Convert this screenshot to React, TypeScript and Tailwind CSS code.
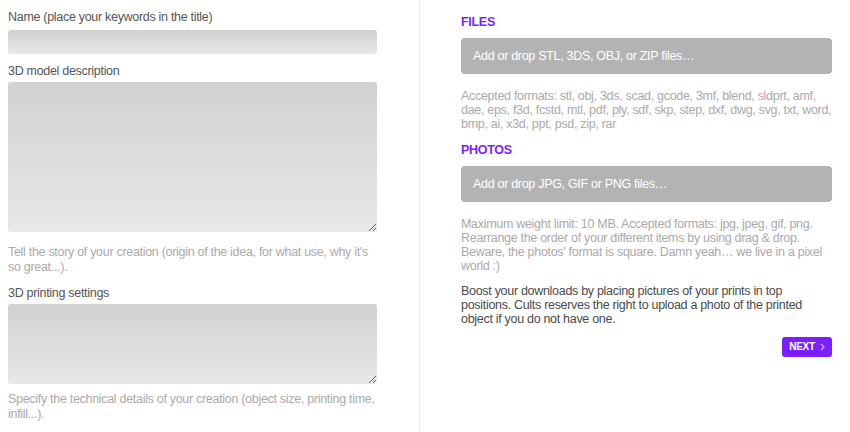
export default function App(){
  const field = 'block w-full rounded-[3px] bg-gradient-to-b from-[#d1d1d1] to-[#e8e8e8] border-0 outline-none'
  return (
    <div className="flex min-h-[432px] bg-white font-['Liberation_Sans',Arial,sans-serif] text-[12.5px] tracking-[-0.3px] leading-[14px]">
      <div className="w-[420px] shrink-0 border-r border-[#ececec] pl-2 pr-[42px] pt-[10px]">
        <label className="block text-[#555]">Name (place your keywords in the title)</label>
        <input className={field + ' mt-[6px] h-6'} />

        <label className="block mt-[10px] text-[#555]">3D model description</label>
        <textarea className={field + ' mt-[4px] h-[150px] resize-y'} />
        <p className="mt-[13px] text-[#aaa] leading-[15px]">Tell the story of your creation (origin of the idea, for what use, why it's so great...).</p>

        <label className="block mt-[11px] text-[#555]">3D printing settings</label>
        <textarea className={field + ' mt-[4px] h-[80px] resize-y'} />
        <p className="mt-[8px] text-[#aaa] leading-[15px]">Specify the technical details of your creation (object size, printing time, infill...).</p>
      </div>

      <div className="flex-1 pl-[41px] pr-[18px] pt-[15px]">
        <h2 className="font-bold text-[#7b1fff]">FILES</h2>
        <div className="mt-[9px] h-9 rounded-[4px] bg-[#b3b3b3] px-3 flex items-center text-white">Add or drop STL, 3DS, OBJ, or ZIP files…</div>
        <p className="mt-[15px] text-[#aaa]">Accepted formats: stl, obj, 3ds, scad, gcode, 3mf, blend, sldprt, amf, dae, eps, f3d, fcstd, mtl, pdf, ply, sdf, skp, step, dxf, dwg, svg, txt, word, bmp, ai, x3d, ppt, psd, zip, rar</p>

        <h2 className="mt-[12px] font-bold text-[#7b1fff]">PHOTOS</h2>
        <div className="mt-[9px] h-9 rounded-[4px] bg-[#b3b3b3] px-3 flex items-center text-white">Add or drop JPG, GIF or PNG files…</div>
        <p className="mt-[15px] text-[#aaa]">Maximum weight limit: 10 MB. Accepted formats: jpg, jpeg, gif, png. Rearrange the order of your different items by using drag &amp; drop. Beware, the photos' format is square. Damn yeah… we live in a pixel world :)</p>
        <p className="mt-[11px] text-[#4a4a4a]">Boost your downloads by placing pictures of your prints in top positions. Cults reserves the right to upload a photo of the printed object if you do not have one.</p>

        <div className="mt-[11px] flex justify-end">
          <button className="h-5 w-[50px] rounded-[3px] bg-[#7b1fff] text-white text-[10px] font-bold tracking-[-0.3px] flex items-center justify-center gap-[5px]">
            NEXT
            <svg width="5" height="8" viewBox="0 0 5 8" fill="none" stroke="#d9c4ff" strokeWidth="1.2"><path d="M1 1l3 3-3 3" /></svg>
          </button>
        </div>
      </div>
    </div>
  )
}
